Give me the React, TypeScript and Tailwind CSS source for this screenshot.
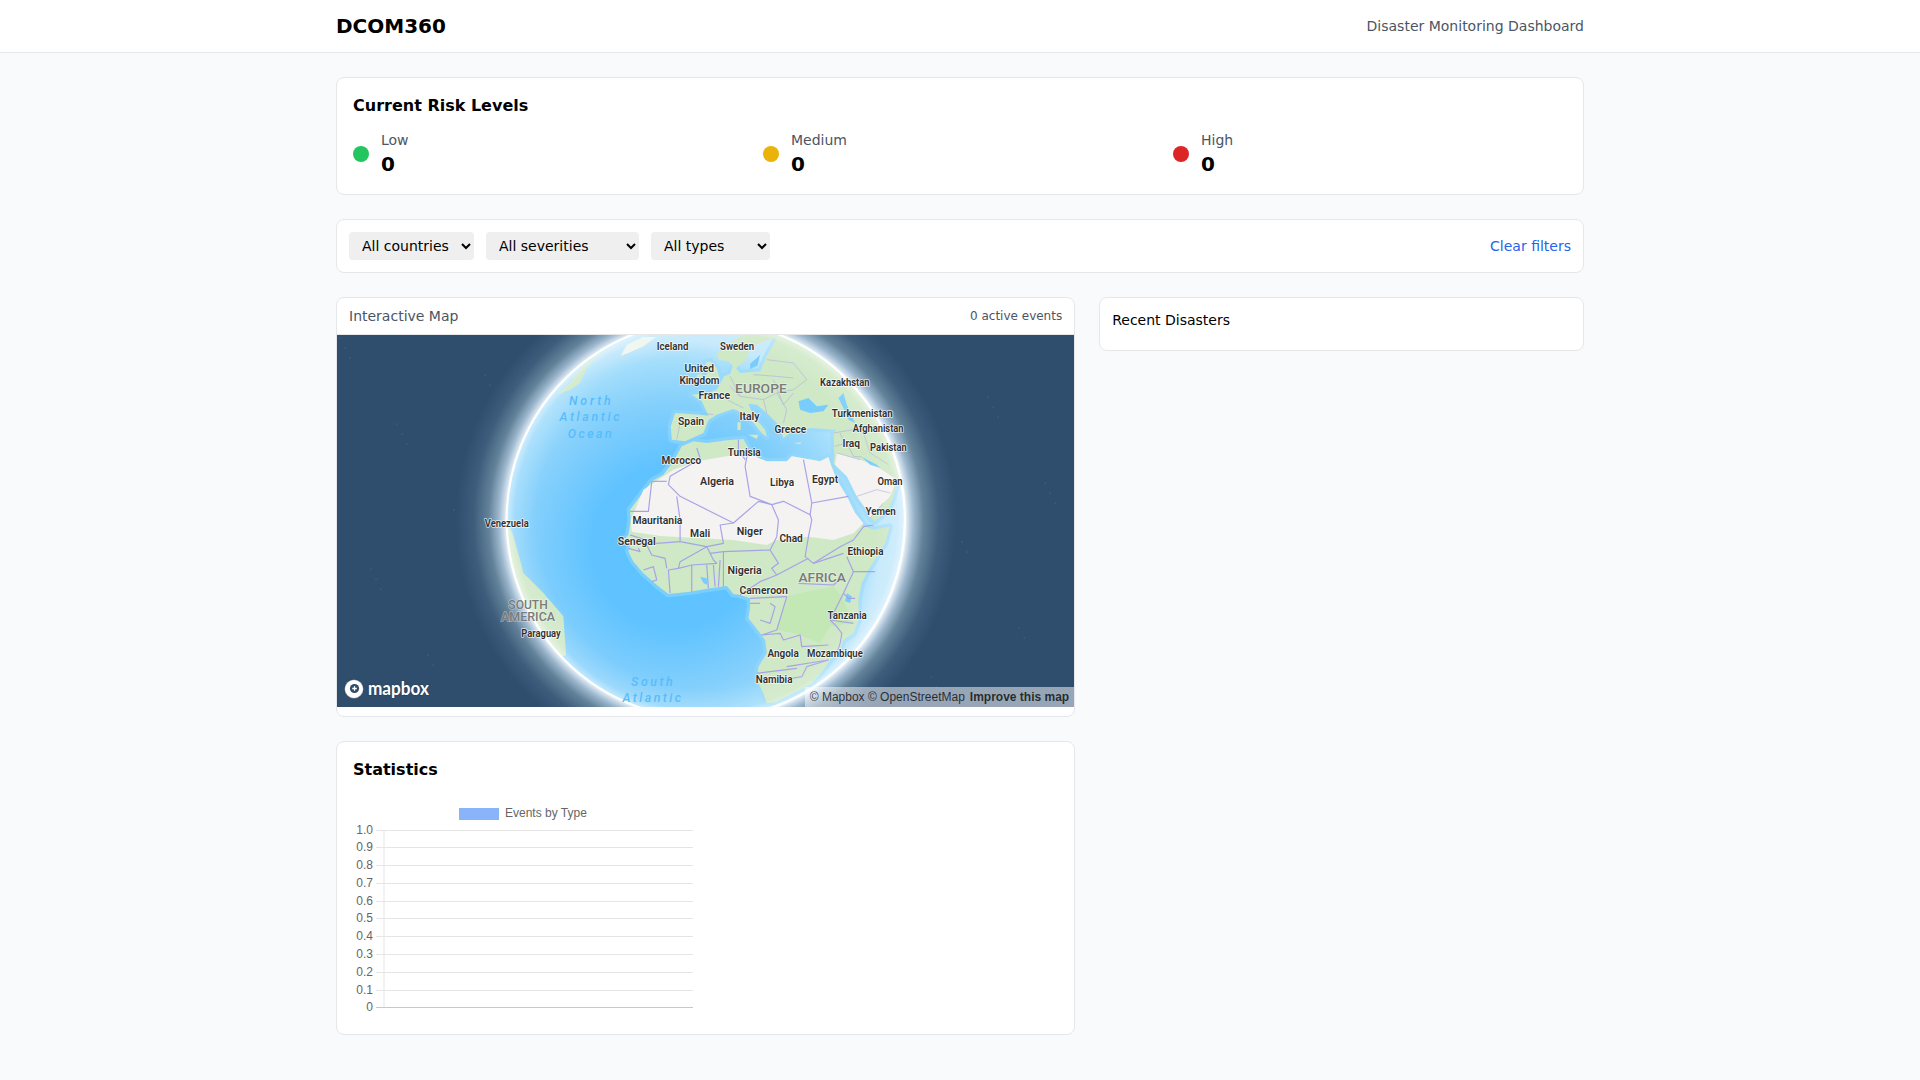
const land = {
  africa:
    '390,530 420,490 455,445 490,425 520,385 545,340 580,325 620,330 680,322 730,318 745,345 775,375 800,385 860,385 875,370 905,375 960,385 985,372 992,395 1010,440 1040,490 1065,540 1090,578 1120,590 1168,581 1155,631 1130,671 1105,711 1085,751 1075,801 1075,861 1060,901 1030,921 1020,951 990,981 970,1011 935,1051 880,1081 830,1106 800,1111 790,1081 770,1041 775,1001 800,961 795,921 780,901 765,881 745,856 750,821 750,796 720,786 700,783 680,759 630,766 570,776 505,783 470,756 430,721 400,686 385,656 390,636 370,621 385,606 392,561',
  eurasia:
    '555,325 515,320 512,280 525,240 600,245 625,248 605,205 575,185 625,180 650,170 672,130 690,122 700,95 720,120 780,115 800,70 830,15 850,-50 1400,-50 1400,430 1195,440 1180,490 1165,530 1125,565 1110,555 1095,525 1070,490 1040,430 1000,392 1003,370 1000,300 1010,290 930,285 900,295 870,300 850,315 830,270 800,240 770,215 745,212 760,250 795,290 800,312 785,300 760,270 720,237 700,228 650,245 625,262 610,300',
  scandinavia: '650,62 690,30 730,5 830,-20 830,15 790,25 750,45 738,80 705,108 685,85 655,80',
  uk: '610,155 640,150 660,140 650,105 630,85 615,90 625,120 605,135',
  ireland: '590,125 605,120 608,140 590,145',
  southAmerica: '-80,561 20,561 40,610 60,680 70,720 130,780 190,850 198,966 100,1000 -80,1000',
  greenland: '170,185 210,150 250,100 300,60 260,105 240,150 210,170',
  sardinia: '712,268 722,268 722,290 712,292',
  sicily: '745,305 775,305 770,318',
  cyprus: '880,330 905,328 900,334',
}

const desert = [
  '392,561 430,470 520,410 590,385 680,370 745,360 775,375 800,385 860,385 875,370 905,375 960,385 985,372 992,395 1010,440 1040,490 1065,540 1090,571 1060,601 1000,621 925,611 830,621 800,636 700,621 600,616 480,609 395,596',
  '1005,395 1010,360 1080,380 1130,400 1190,440 1170,490 1130,530 1110,555 1095,525 1070,490 1040,430',
]

const borders = [
  '455,445 500,445',
  '455,445 445,535 390,535',
  '590,345 600,375 570,395 510,430 505,455 540,490 700,570 660,576 670,631 620,641 540,626 540,561 530,490',
  '540,626 470,631 390,606',
  '700,570 775,505 815,515 750,490 735,400 745,345',
  '715,320 715,350 735,380',
  '910,380 935,510 930,545 850,505 815,515 835,561 830,611 810,651',
  '935,510 1045,490',
  '930,545 935,561 925,611 915,671 940,691 1030,661',
  '620,641 630,661 670,656 810,651 835,691 815,706 830,726 780,746 750,766 720,786',
  '670,656 670,761',
  '620,641 540,686 535,706 575,696 650,691 640,681 630,661',
  '575,696 575,776',
  '620,696 625,766',
  '640,696 645,761',
  '660,681 655,761',
  '535,706 505,711 510,781',
  '440,636 455,666 495,676 500,706',
  '430,711 460,701 470,741 455,746',
  '385,646 420,656 415,646',
  '830,726 925,676',
  '940,691 1020,641 1060,621 1090,581 1120,576',
  '1040,671 1060,716 1125,716',
  '1060,716 1030,781 990,861 1010,881 1025,901 1020,931 1010,961',
  '895,751 1000,756 1030,731',
  '860,791 750,796',
  '750,811 780,811',
  '810,811 825,821 810,871 780,861',
  '860,791 830,891 785,906 840,901 850,921 900,906 905,941 985,936',
  '990,861 1060,871',
  '1030,781 1045,796 1065,796',
  '860,1001 985,981 920,1001 905,1031 790,1051',
  '770,1021 890,1006',
]

const europeBorders = [
  '600,240 640,245',
  '540,270 530,320',
  '650,180 700,210 730,225',
  '690,130 720,190 790,200 830,180 880,170 920,140 880,90 800,80',
  '820,140 850,215 880,180',
  '760,125 830,130 880,135',
  '720,190 690,160',
  '790,200 800,240',
  '830,180 860,230 850,270',
  '1000,300 1060,290 1090,300',
  '1003,340 1040,330 1060,370 1085,372',
  '1020,300 1035,335',
  '1090,300 1110,360 1165,395',
  '1010,360 1080,380',
  '1070,490 1130,470 1170,480',
  '1110,555 1150,510',
]

const labels = [
  ['Iceland', 470, 50, 95], ['Sweden', 660, 50, 102], ['United', 553, 116, 89], ['Kingdom', 538, 153, 120],
  ['France', 595, 199, 95], ['Kazakhstan', 960, 159, 148], ['Turkmenistan', 995, 252, 183], ['Afghanistan', 1058, 297, 152],
  ['Spain', 534, 276, 78], ['Italy', 718, 260, 60], ['Greece', 823, 300, 95], ['Iraq', 1027, 343, 53],
  ['Pakistan', 1110, 353, 110], ['Tunisia', 683, 368, 99], ['Morocco', 484, 393, 119], ['Algeria', 600, 455, 102],
  ['Libya', 810, 460, 72], ['Egypt', 936, 450, 78], ['Oman', 1132, 455, 75], ['Yemen', 1096, 547, 91],
  ['Mauritania', 397, 573, 150], ['Mali', 570, 613, 60], ['Niger', 710, 607, 78], ['Chad', 838, 626, 70],
  ['Senegal', 353, 635, 114], ['Venezuela', -46, 582, 132], ['Ethiopia', 1042, 666, 108], ['Nigeria', 682, 724, 103],
  ['Cameroon', 718, 783, 145], ['Tanzania', 982, 859, 118], ['Paraguay', 64, 912, 118], ['Angola', 802, 972, 94],
  ['Mozambique', 921, 973, 167], ['Namibia', 767, 1051, 110],
] as const

const continents = [
  ['EUROPE', 705, 179, 155], ['AFRICA', 895, 748, 142], ['SOUTH', 25, 827, 118], ['AMERICA', 3, 865, 162],
] as const

const oceans = [
  ['North', 207, 217, 125], ['Atlantic', 178, 265, 180], ['Ocean', 203, 315, 132], ['South', 393, 1058, 125], ['Atlantic', 367, 1106, 176],
] as const

// fixed star field, no Math.random so every render is the same
const stars = Array.from({ length: 70 }, (_, i) => ({
  x: 340 + ((i * 197) % 731),
  y: 338 + ((i * 113) % 366),
}))

const ticks = ['1.0', '0.9', '0.8', '0.7', '0.6', '0.5', '0.4', '0.3', '0.2', '0.1', '0']
const tickY = [830.5, 847.5, 865.5, 883.5, 901.5, 918.5, 936.5, 954.5, 972.5, 990.5, 1007.5]

function GlobeMap() {
  return (
    <svg viewBox="337 335 737 372" preserveAspectRatio="none" className="block h-full w-full">
      <defs>
        <radialGradient id="halo" gradientUnits="userSpaceOnUse" cx="706" cy="520" r="250">
          <stop offset="0.796" stopColor="#ffffff" />
          <stop offset="0.805" stopColor="#d6e4ef" />
          <stop offset="0.83" stopColor="#9bb6cd" />
          <stop offset="0.87" stopColor="#628299" />
          <stop offset="0.93" stopColor="#3e5d7c" />
          <stop offset="1" stopColor="#2f4d6c" />
        </radialGradient>
        <radialGradient id="ocean" gradientUnits="userSpaceOnUse" cx="520" cy="640" r="620">
          <stop offset="0" stopColor="#5cc2ff" />
          <stop offset="0.4" stopColor="#60c3ff" />
          <stop offset="0.7" stopColor="#85d0fc" />
          <stop offset="0.9" stopColor="#a5defb" />
          <stop offset="1" stopColor="#c5e9fb" />
        </radialGradient>
        <radialGradient id="haze" gradientUnits="userSpaceOnUse" cx="617" cy="560" r="597">
          <stop offset="0.85" stopColor="#ffffff" stopOpacity="0" />
          <stop offset="0.96" stopColor="#ffffff" stopOpacity="0.15" />
          <stop offset="1" stopColor="#ffffff" stopOpacity="0.5" />
        </radialGradient>
        <clipPath id="globe">
          <circle cx="617" cy="560" r="597" />
        </clipPath>
        <filter id="soft">
          <feGaussianBlur stdDeviation="1.2" />
        </filter>
      </defs>
      <rect x="337" y="335" width="737" height="372" fill="#2f4d6c" />
      {stars.map((s, i) => (
        <circle key={i} cx={s.x} cy={s.y} r="0.6" fill="#ffffff" opacity="0.22" />
      ))}
      <circle cx="706" cy="520" r="250" fill="url(#halo)" />
      <g transform="translate(500 333) scale(0.33333)">
        <circle cx="617" cy="560" r="597" fill="url(#ocean)" />
        <g clipPath="url(#globe)">
          <g filter="url(#soft)">
            <g fill="#93d9fb" stroke="#93d9fb" strokeWidth="20" strokeLinejoin="round" opacity="0.5">
              <polygon points={land.africa} />
              <polygon points={land.eurasia} />
              <polygon points={land.uk} />
            </g>
            <g fill="#cfe8c6">
              {Object.values(land).map((pts, i) => (
                <polygon key={i} points={pts} />
              ))}
            </g>
            <polygon points="362,68 380,35 430,12 468,12 430,40 385,60" fill="#eef6ee" />
            <polygon points="830,890 860,790 1000,760 1030,800 1060,870 990,880 960,930 880,900" fill="#c4e7b6" />
            <g fill="#f5f2f2">
              {desert.map((pts, i) => (
                <polygon key={i} points={pts} />
              ))}
            </g>
            <g fill="#79cdfc">
              <polygon points="895,205 925,195 950,220 985,215 970,235 930,240 900,230" />
              <polygon points="1030,180 1040,215 1055,250 1065,270 1045,260 1030,225 1015,195" />
              <polygon points="1085,372 1130,395 1140,405 1110,395" />
              <polygon points="750,92 770,75 780,65 772,98 750,108" />
              <polygon points="1040,781 1055,790 1050,810 1035,805" />
              <polygon points="600,731 620,736 622,756 610,750" />
            </g>
            <g fill="none" stroke="#a5a3e6" strokeWidth="3.5" strokeLinejoin="round">
              {borders.map((pts, i) => (
                <polyline key={i} points={pts} />
              ))}
            </g>
            <g fill="none" stroke="#b4b3dc" strokeWidth="2" strokeLinejoin="round">
              {europeBorders.map((pts, i) => (
                <polyline key={i} points={pts} />
              ))}
            </g>
          </g>
          <circle cx="617" cy="560" r="597" fill="url(#haze)" />
        </g>
        <circle cx="617" cy="560" r="597" fill="none" stroke="#ffffff" strokeWidth="6" />
        <g fontFamily="Roboto, sans-serif" fontWeight="600" fontSize="32" fill="#303030" stroke="#ffffff" strokeOpacity="0.75" strokeWidth="5" paintOrder="stroke" strokeLinejoin="round">
          {labels.map(([name, x, y, w]) => (
            <text key={name} x={x} y={y} textLength={w} lengthAdjust="spacingAndGlyphs">
              {name}
            </text>
          ))}
        </g>
        <g fontFamily="Roboto, sans-serif" fontWeight="500" fontSize="37" fill="#7b7b7b" stroke="#ffffff" strokeOpacity="0.4" strokeWidth="4" paintOrder="stroke">
          {continents.map(([name, x, y, w]) => (
            <text key={name} x={x} y={y} textLength={w} lengthAdjust="spacingAndGlyphs">
              {name}
            </text>
          ))}
        </g>
        <g fontFamily="Roboto, sans-serif" fontStyle="italic" fontWeight="500" fontSize="37" fill="#58bcfb">
          {oceans.map(([name, x, y, w]) => (
            <text key={name + y} x={x} y={y} textLength={w} lengthAdjust="spacing">
              {name}
            </text>
          ))}
        </g>
      </g>
      <circle cx="354" cy="689" r="9.5" fill="#ffffff" stroke="#1f3347" strokeOpacity="0.5" strokeWidth="1" />
      <circle cx="354.5" cy="688.5" r="4.6" fill="#2f4d6c" />
      <path d="M354.5 686.2 v4.6 M352.2 688.5 h4.6" stroke="#ffffff" strokeWidth="1.3" />
      <text x="368" y="695" fontFamily="Lato, sans-serif" fontWeight="700" fontSize="18" fill="#ffffff" stroke="#1f3347" strokeOpacity="0.5" strokeWidth="1.2" paintOrder="stroke" textLength="61" lengthAdjust="spacingAndGlyphs">
        mapbox
      </text>
    </svg>
  )
}

function EventsChart() {
  return (
    <svg viewBox="353 794 360 224" className="block h-[224px] w-[360px]">
      <rect x="459" y="808" width="40" height="12" fill="#89b4fa" />
      <text x="505" y="817" fontFamily="Liberation Sans, Arial, sans-serif" fontSize="12" fill="#666666">
        Events by Type
      </text>
      <line x1="384" y1="830" x2="384" y2="1008" stroke="#e5e5e5" />
      {ticks.map((t, i) => (
        <g key={t}>
          <line x1="376" y1={tickY[i]} x2="693" y2={tickY[i]} stroke={t === '0' ? '#c8c8c8' : '#e5e5e5'} />
          <text x="373" y={tickY[i] + 3} textAnchor="end" fontFamily="Liberation Sans, Arial, sans-serif" fontSize="12" fill="#666666">
            {t}
          </text>
        </g>
      ))}
    </svg>
  )
}

function RiskLevel({ label, dot }: { label: string; dot: string }) {
  return (
    <div className="flex items-center gap-3">
      <div className={`h-4 w-4 rounded-full ${dot}`} />
      <div>
        <div className="text-sm text-[#4b5563]">{label}</div>
        <div className="text-xl font-bold">0</div>
      </div>
    </div>
  )
}

export default function App() {
  return (
    <div className="min-h-screen bg-[#f9fafb] font-['DejaVu_Sans',sans-serif] text-black">
      {/* Header */}
      <header className="border-b border-[#e5e7eb] bg-white">
        <div className="mx-auto flex max-w-7xl items-center justify-between px-4 py-3">
          <h1 className="text-xl font-bold">DCOM360</h1>
          <span className="text-sm text-[#4b5563]">Disaster Monitoring Dashboard</span>
        </div>
      </header>

      <main className="mx-auto flex max-w-7xl flex-col gap-6 px-4 py-6">
        {/* Risk levels */}
        <section className="rounded-lg border border-[#e5e7eb] bg-white p-4">
          <h2 className="mb-3 text-base font-bold">Current Risk Levels</h2>
          <div className="grid grid-cols-3 gap-4">
            <RiskLevel label="Low" dot="bg-[#22c55e]" />
            <RiskLevel label="Medium" dot="bg-[#eab308]" />
            <RiskLevel label="High" dot="bg-[#dc2626]" />
          </div>
        </section>

        {/* Filters */}
        <section className="flex items-center justify-between rounded-lg border border-[#e5e7eb] bg-white p-3">
          <div className="flex items-center gap-3">
            <select className="h-7 w-[125px] rounded bg-[#efefef] pl-[9px] text-sm">
              <option>All countries</option>
            </select>
            <select className="h-7 w-[153px] rounded bg-[#efefef] pl-[9px] text-sm">
              <option>All severities</option>
            </select>
            <select className="h-7 w-[119px] rounded bg-[#efefef] pl-[9px] text-sm">
              <option>All types</option>
            </select>
          </div>
          <button className="text-sm text-[#2563eb]">Clear filters</button>
        </section>

        <div className="grid grid-cols-5 items-start gap-6">
          <div className="col-span-3 flex flex-col gap-6">
            {/* Map */}
            <section className="overflow-hidden rounded-lg border border-[#e5e7eb] bg-white pb-[9px]">
              <div className="flex items-center justify-between border-b border-[#e5e7eb] px-3 py-2">
                <span className="text-sm text-[#4b5563]">Interactive Map</span>
                <span className="text-xs text-[#4b5563]">0 active events</span>
              </div>
              <div className="relative h-[372px]">
                <GlobeMap />
                <div className="absolute bottom-0 right-0 flex h-5 items-center gap-[5px] bg-white/50 px-[5px] font-['Liberation_Sans',Arial,sans-serif] text-xs text-black/75">
                  <span>© Mapbox © OpenStreetMap</span>
                  <span className="font-bold">Improve this map</span>
                </div>
              </div>
            </section>

            {/* Statistics */}
            <section className="rounded-lg border border-[#e5e7eb] bg-white p-4">
              <h2 className="mb-3 text-base font-bold">Statistics</h2>
              <EventsChart />
            </section>
          </div>

          {/* Recent disasters */}
          <section className="col-span-2 rounded-lg border border-[#e5e7eb] bg-white p-3">
            <h2 className="mb-2 text-sm">Recent Disasters</h2>
          </section>
        </div>
      </main>
    </div>
  )
}
